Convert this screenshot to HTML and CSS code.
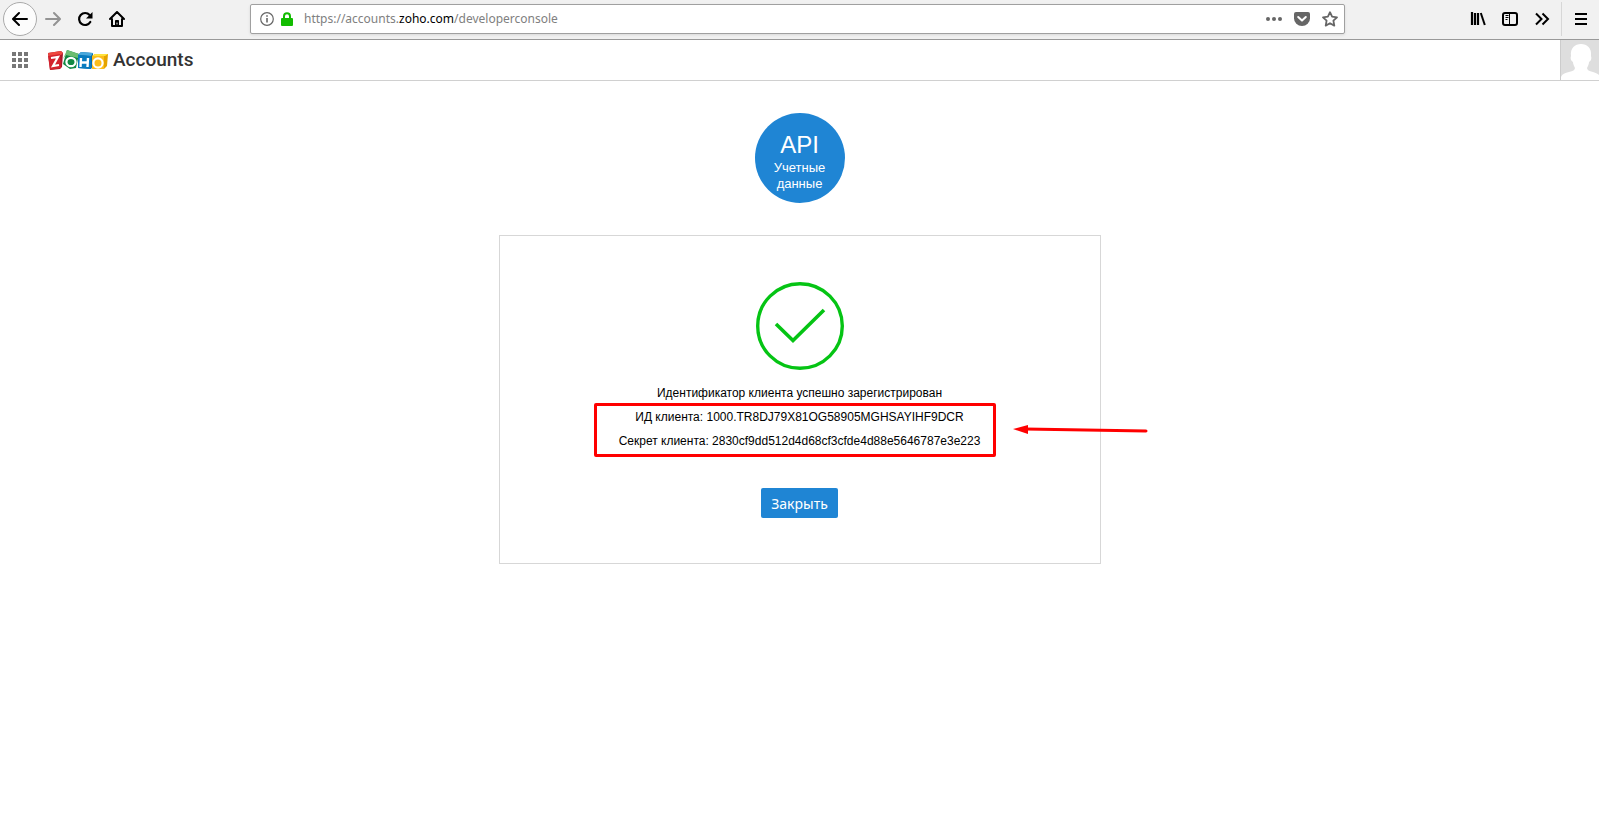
FILE: index.html
```html
<!DOCTYPE html>
<html lang="ru">
<head>
<meta charset="utf-8">
<title>Zoho Accounts</title>
<link rel="stylesheet" href="styles.css">
</head>
<body>
<nav class="toolbar" aria-label="Browser">
  <button class="tool back" aria-label="Back"><svg width="16" height="16" viewBox="0 0 16 16" fill="none" stroke="#000" stroke-width="2" stroke-linecap="round" stroke-linejoin="round"><path d="M15 8H1.500M7 2L1 8l6 6"/></svg></button>
  <button class="tool" aria-label="Forward"><svg width="16" height="16" viewBox="0 0 16 16" fill="none" stroke="#939393" stroke-width="2" stroke-linecap="round" stroke-linejoin="round"><path d="M1 8h13.500M9 2l6 6-6 6"/></svg></button>
  <button class="tool" aria-label="Reload"><svg width="16" height="16" viewBox="0 0 16 16" fill="none" stroke="#000" stroke-width="2.200"><path d="M13.300 11A6 6 0 1 1 12.600 4" stroke-linecap="round"/><path d="M15.500 1v6.500H9z" fill="#000" stroke="none"/></svg></button>
  <button class="tool" aria-label="Home"><svg width="16" height="16" viewBox="0 0 16 16" fill="none" stroke="#000" stroke-width="2" stroke-linecap="round" stroke-linejoin="round"><path d="M1 8l7-7 7 7M3 8v7h10V8"/><path d="M6.500 14.500v-5h3v5z" fill="#000" stroke-width="1"/><path d="M8 12v1" stroke="#f1f1f1" stroke-width="1"/></svg></button>
  <div class="spacer"></div>
  <div class="urlbar">
    <svg class="info" width="14" height="14" viewBox="0 0 14 14" fill="none" stroke="#666"><circle cx="7" cy="7" r="6.300" stroke-width="1.200"/><path d="M7 6v4.500M7 3.300v1.500" stroke-width="1.600"/></svg>
    <svg class="lock" width="12" height="14" viewBox="0 0 12 14"><path d="M3 7V4.200a3 3 0 0 1 6 0V7" fill="none" stroke="#12bc00" stroke-width="2"/><rect y="6" width="12" height="8" rx="1" fill="#12bc00"/></svg>
    <div class="url">https://accounts.<b>zoho.com</b>/developerconsole</div>
    <button class="url-action" aria-label="Page actions"><svg width="16" height="16" viewBox="0 0 16 16" fill="#666"><circle cx="2" cy="8" r="2"/><circle cx="8" cy="8" r="2"/><circle cx="14" cy="8" r="2"/></svg></button>
    <button class="url-action" aria-label="Pocket"><svg width="16" height="16" viewBox="0 0 16 16"><path d="M2 1h12a2 2 0 0 1 2 2v4.500a8 7.500 0 0 1-16 0V3a2 2 0 0 1 2-2z" fill="#666"/><path d="M4.200 6L8 9.600 11.800 6" fill="none" stroke="#fff" stroke-width="2" stroke-linecap="round" stroke-linejoin="round"/></svg></button>
    <button class="url-action" aria-label="Bookmark"><svg width="16" height="16" viewBox="0 0 16 16"><path d="M8 1.200l2.100 4.500 4.900.6-3.600 3.400.9 4.900L8 12.200l-4.300 2.400.9-4.900L1 6.300l4.900-.6z" fill="none" stroke="#666" stroke-width="1.800" stroke-linejoin="round"/></svg></button>
  </div>
  <div class="spacer"></div>
  <button class="tool" aria-label="Library"><svg width="16" height="16" viewBox="0 0 16 16" fill="none" stroke="#000" stroke-width="2"><path d="M2 1v13M5 2v12M8 2v12" stroke-width="2.200"/><path d="M10.800 2l4 12"/></svg></button>
  <button class="tool" aria-label="Sidebar"><svg width="16" height="16" viewBox="0 0 16 16" fill="none" stroke="#000"><rect x="1" y="2" width="14" height="12" rx="2" stroke-width="2"/><path d="M7.500 2v12M3.500 4.500h3M3.500 6.500h3M3.500 8.500h2"/></svg></button>
  <button class="tool" aria-label="More tools"><svg width="16" height="16" viewBox="0 0 16 16" fill="none" stroke="#000" stroke-width="2"><path d="M2 2.500L7.500 8 2 13.500M8.500 2.500L14 8l-5.500 5.500"/></svg></button>
  <button class="tool menu" aria-label="Menu"><svg width="12" height="12" viewBox="0 0 12 12" stroke="#000" stroke-width="2"><path d="M0 1h12M0 6h12M0 11h12"/></svg></button>
</nav>
<header class="header">
  <button class="apps" aria-label="Apps"><svg width="16" height="16" viewBox="0 0 16 16" fill="#777"><path d="M0 0h4v4H0zM6 0h4v4H6zM12 0h4v4h-4zM0 6h4v4H0zM6 6h4v4H6zM12 6h4v4h-4zM0 12h4v4H0zM6 12h4v4H6zM12 12h4v4h-4z"/></svg></button>
  <a class="brand" href="#">
    <svg width="60" height="20" viewBox="0 0 60 20" fill="none" role="img" aria-label="Zoho">
      <path d="M0 3l13-2 2 2-1 14-2 2-10 1z" fill="#a9182a"/><path d="M0 3l13-2 2 2-2 2L1 7z" fill="#ee473e"/><path d="M0 6l12-2 1 14-11 2z" fill="#d3222d"/>
      <path d="M19 0l12 4-3 14-6 1-7-5z" fill="#118843"/><path d="M19 0l12 4-1 4-12-3-3 4z" fill="#6cbd71"/>
      <path d="M30 5l3-3 12 1v13l-2 3-13-1z" fill="#0869a8"/><path d="M30 5l3-3 12 1-2 3z" fill="#48a8dc"/><path d="M30 5l13 1v13l-13-1z" fill="#087bbf"/>
      <path d="M44 6l3-2h13l-1 12-3 3H44z" fill="#e5a400"/><path d="M44 6l3-2h13l-3 2z" fill="#ffe23d"/><path d="M44 6h12v13H44z" fill="#fdbd1b"/>
      <path d="M3 8l7-1-5 9 6-1" stroke="#fff" stroke-width="2.200"/><ellipse cx="23" cy="12" rx="4.600" ry="4.200" stroke="#fff" stroke-width="2.200"/><path d="M33 8l-.5 9M40 8l-.5 9M33 12.500h7" stroke="#fff" stroke-width="2.400"/><circle cx="50" cy="13" r="4.600" stroke="#fff" stroke-width="2.200"/>
    </svg>
    <span>Accounts</span>
  </a>
  <button class="avatar" aria-label="Profile"><svg width="38" height="40" viewBox="0 0 38 40"><path fill="#dedede" d="M0 0h38v40H0z"/><path fill="#fff" d="M0 40v-3c1-3 4-4 8-5 4-1 6-2 6-4-1-2-2-4-2-6-2-1-3-4-2-6C9 8 14 4 20 4s11 4 10 12c1 2 0 5-2 6 0 2-1 4-2 6 0 2 2 3 6 4 3 1 5 2 6 3v5z"/></svg></button>
</header>
<main class="main">
  <h1 class="badge"><span class="badge-title">API</span>Учетные<br>данные</h1>
  <section class="card">
    <svg class="check" width="88" height="88" viewBox="0 0 88 88" fill="none" stroke="#05c414"><circle cx="44" cy="44" r="42.300" stroke-width="3.400"/><path d="M20 42l17 16.500L68 28" stroke-width="3.600"/></svg>
    <p class="line">Идентификатор клиента успешно зарегистрирован</p>
    <div class="credentials">
      <p class="line">ИД клиента: 1000.TR8DJ79X81OG58905MGHSAYIHF9DCR</p>
      <p class="line">Секрет клиента: 2830cf9dd512d4d68cf3cfde4d88e5646787e3e223</p>
      <svg class="arrow" width="136" height="12" viewBox="0 0 136 12"><path d="M12 5l121 2" stroke="red" stroke-width="3" stroke-linecap="round"/><path d="M0 5l15-4v9z" fill="red"/></svg>
    </div>
    <button class="close">Закрыть</button>
  </section>
</main>
</body>
</html>
```
FILE: styles.css
```css
* { box-sizing: border-box; }
body { margin: 0; background: #fff; color: #000; font-family: "Liberation Sans", Arial, sans-serif; }
button { border: 0; padding: 0; background: none; font: inherit; display: flex; align-items: center; justify-content: center; }
svg { display: block; flex: none; }

.toolbar { display: flex; align-items: center; height: 40px; padding: 0 0 2px 3px; background: #f1f1f1; border-bottom: 1px solid #999; }
.tool { flex: none; width: 32px; height: 32px; }
.back { width: 34px; height: 34px; border: 1px solid #aaa; border-radius: 50%; background: #fcfcfc; }
.spacer { flex: 0 1 117px; }
.menu { width: 38px; height: 34px; margin-left: 3px; border-left: 1px solid #d7d7d7; }
.urlbar { flex: 1; display: flex; align-items: center; height: 30px; padding: 0 6px 0 9px; background: #fff; border: 1px solid #a0a0a0; border-radius: 2px; box-shadow: 0 1px 3px #0000001a; }
.lock { margin-left: 7px; }
.url { flex: 1; margin-left: 11px; font: 12px/20px "Noto Sans", sans-serif; color: #808080; white-space: nowrap; }
.url b { font-weight: 400; color: #000; }
.url-action { width: 16px; height: 20px; margin-left: 12px; }

.header { display: flex; align-items: center; height: 41px; padding-left: 12px; border-bottom: 1px solid #d0d0d0; }
.brand { display: flex; align-items: center; gap: 5px; margin-left: 20px; color: #333; text-decoration: none; font: 500 19px/40px Roboto, sans-serif; }
.avatar { margin-left: auto; width: 39px; height: 40px; border-left: 1px solid #ccc; }

.main { display: flex; flex-direction: column; align-items: center; gap: 32px; padding-top: 32px; }
.badge { width: 90px; height: 90px; margin: 0; padding-top: 18px; border-radius: 50%; background: #1f85d4; color: #fff; font-size: 13px; line-height: 16px; font-weight: 400; text-align: center; }
.badge-title { display: block; font-size: 24px; line-height: 28px; margin-bottom: 1px; }
.card { display: flex; flex-direction: column; align-items: center; width: 602px; max-width: 100%; padding: 46px 0 45px; border: 1px solid #d7d7d7; }
.check { margin-bottom: 11px; }
.line { margin: 0; font-size: 12px; line-height: 24px; text-align: center; white-space: nowrap; }
.credentials { position: relative; }
.credentials::after { content: ""; position: absolute; inset: -2px -16px -4px -25px; border: 3px solid red; border-radius: 2px; }
.arrow { position: absolute; left: calc(100% + 33px); top: 19px; }
.close { height: 30px; margin-top: 35px; padding: 1px 10px 0; border-radius: 2px; background: #1f85d4; color: #fff; font: 14px/20px "Noto Sans", sans-serif; }
```
